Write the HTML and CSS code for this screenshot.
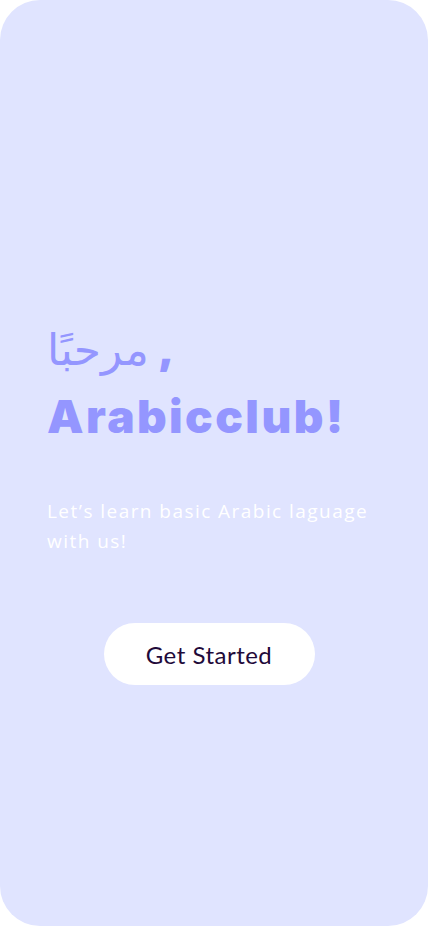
FILE: index.html
```html
<!DOCTYPE html>
<html lang="en">
<head>
<meta charset="utf-8">
<title>Arabicclub</title>
<link rel="stylesheet" href="styles.css">
</head>
<body>
<main class="screen">
  <section class="hero">
    <h2 class="greet"><span class="ar" lang="ar" dir="rtl">مرحبًا</span><span class="comma">,</span></h2>
    <h1 class="title">Arabicclub!</h1>
    <p class="sub">Let’s learn basic Arabic laguage with us!</p>
    <div class="actions">
      <button class="cta">Get Started</button>
    </div>
  </section>
</main>
</body>
</html>
```

FILE: styles.css
```css
* { box-sizing: border-box; }
html, body { margin: 0; padding: 0; background: #ffffff; }
.screen {
  width: 428px;
  height: 926px;
  background: #e0e4ff;
  border-radius: 40px;
  display: flex;
  flex-direction: column;
  padding: 318px 47px 0 47px;
}
.hero { display: flex; flex-direction: column; }
.greet {
  margin: 0;
  font-weight: 400;
  font-size: 44px;
  line-height: 60px;
  color: #9496ff;
  display: flex;
  gap: 10px;
  align-items: center;
}
.comma { font-family: "Open Sans", sans-serif; font-weight: 800; font-size: 46px; line-height: 60px; }
.ar { font-family: "Noto Sans", "DejaVu Sans", sans-serif; }
.title {
  margin: 8px 0 0 0;
  font-family: "Inter", sans-serif;
  font-weight: 900;
  font-size: 46px;
  line-height: 60px;
  color: #9496ff;
  letter-spacing: 2.4px;
}
.sub {
  margin: 50px 0 0 0;
  font-family: "Open Sans", sans-serif;
  font-weight: 500;
  font-size: 19px;
  line-height: 30px;
  letter-spacing: 1.45px;
  color: #ffffff;
  max-width: 340px;
}
.actions { display: flex; justify-content: center; margin-top: 67px; }
.cta {
  margin-left: -10px;
  width: 211px;
  height: 62px;
  border: none;
  border-radius: 31px;
  background: #ffffff;
  color: #1f0a3a;
  font-family: "Lato", sans-serif;
  font-size: 24px;
  letter-spacing: 0.5px;
  font-weight: 400;
}
```
